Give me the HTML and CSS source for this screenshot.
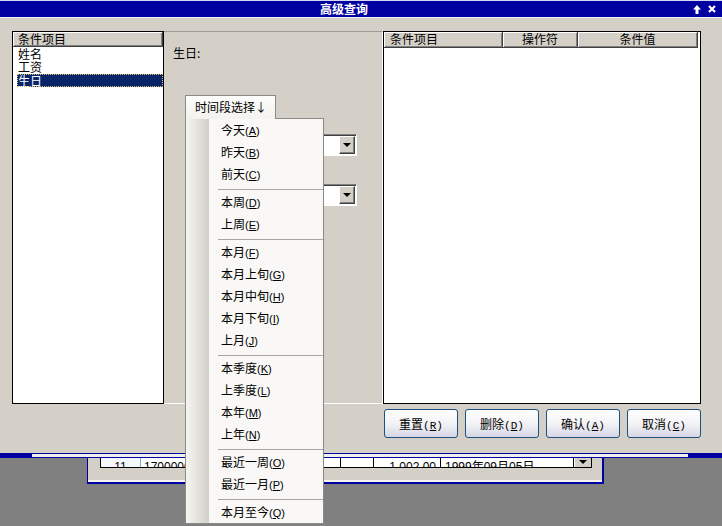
FILE: index.html
```html
<!DOCTYPE html>
<html lang="zh-CN">
<head>
    <meta charset="UTF-8">
    <title>高级查询</title>
    <link rel="stylesheet" href="styles.css">
</head>
<body>
    <div class="desktop">
        <!-- Query dialog -->
        <div class="window">
            <div class="titlebar">
                <span class="title">高级查询</span>
                <div class="title-btns">
                    <svg width="8" height="9" viewBox="0 0 8 9"><path d="M4 0 L8 4.5 H5.5 V9 H2.5 V4.5 H0 Z" fill="#fff"/></svg>
                    <svg width="8" height="8" viewBox="0 0 8 8"><path d="M1 1 L7 7 M7 1 L1 7" stroke="#fff" stroke-width="2.2"/></svg>
                </div>
            </div>

            <div class="body">
                <div class="panes">
                    <!-- Field list -->
                    <div class="list-pane">
                        <div class="col-head">条件项目</div>
                        <ul class="items">
                            <li>姓名</li>
                            <li>工资</li>
                            <li class="sel">生日</li>
                        </ul>
                    </div>

                    <!-- Editor for current field -->
                    <div class="edit-pane">
                        <div class="field-label">生日:</div>
                        <div class="range-picker">
                            <div class="range-btn">时间段选择↓</div>
                            <div class="menu">
                                <div class="menu-item">今天<span class="key">(<u>A</u>)</span></div>
                                <div class="menu-item">昨天<span class="key">(<u>B</u>)</span></div>
                                <div class="menu-item">前天<span class="key">(<u>C</u>)</span></div>
                                <div class="menu-sep"></div>
                                <div class="menu-item">本周<span class="key">(<u>D</u>)</span></div>
                                <div class="menu-item">上周<span class="key">(<u>E</u>)</span></div>
                                <div class="menu-sep"></div>
                                <div class="menu-item">本月<span class="key">(<u>F</u>)</span></div>
                                <div class="menu-item">本月上旬<span class="key">(<u>G</u>)</span></div>
                                <div class="menu-item">本月中旬<span class="key">(<u>H</u>)</span></div>
                                <div class="menu-item">本月下旬<span class="key">(<u>I</u>)</span></div>
                                <div class="menu-item">上月<span class="key">(<u>J</u>)</span></div>
                                <div class="menu-sep"></div>
                                <div class="menu-item">本季度<span class="key">(<u>K</u>)</span></div>
                                <div class="menu-item">上季度<span class="key">(<u>L</u>)</span></div>
                                <div class="menu-item">本年<span class="key">(<u>M</u>)</span></div>
                                <div class="menu-item">上年<span class="key">(<u>N</u>)</span></div>
                                <div class="menu-sep"></div>
                                <div class="menu-item">最近一周<span class="key">(<u>O</u>)</span></div>
                                <div class="menu-item">最近一月<span class="key">(<u>P</u>)</span></div>
                                <div class="menu-sep"></div>
                                <div class="menu-item">本月至今<span class="key">(<u>Q</u>)</span></div>
                            </div>
                        </div>
                        <div class="combo first"><span class="combo-arrow"><i></i></span></div>
                        <div class="combo second"><span class="combo-arrow"><i></i></span></div>
                    </div>

                    <!-- Condition grid -->
                    <div class="grid-pane">
                        <div class="grid-head">
                            <span class="left">条件项目</span>
                            <span>操作符</span>
                            <span>条件值</span>
                        </div>
                    </div>
                </div>

                <div class="actions">
                    <button class="btn">重置<span class="acc">(<u>R</u>)</span></button>
                    <button class="btn">删除<span class="acc">(<u>D</u>)</span></button>
                    <button class="btn">确认<span class="acc">(<u>A</u>)</span></button>
                    <button class="btn">取消<span class="acc">(<u>C</u>)</span></button>
                </div>
            </div>

            <div class="frame-bottom">
                <span class="seg-edge"></span>
                <span class="seg-mid"></span>
                <span class="seg-edge right"></span>
            </div>
        </div>

        <!-- Window behind the dialog -->
        <div class="back-window">
            <div class="back-row">
                <span class="cell c1">11</span>
                <span class="cell c2">17000003</span>
                <span class="cell c3"></span>
                <span class="cell c4">1,002.00</span>
                <span class="cell c5">1999年09月05日</span>
                <span class="cell c6"><i></i></span>
            </div>
        </div>
    </div>
</body>
</html>
```
FILE: styles.css
```css
:root {
    --face: #d4d0c8;
    --title-blue: #0000a0;
    --shadow: #808080;
    --dark: #404040;
}

* {
    box-sizing: border-box;
}

body {
    margin: 0;
    background: var(--shadow);
    font-family: "Noto Sans CJK SC", "Liberation Sans", sans-serif;
    font-size: 12px;
    color: #000;
}

.desktop {
    width: 722px;
    height: 526px;
    overflow: hidden;
}

.window {
    width: 722px;
    background: var(--face);
}

/* Title bar */
.titlebar {
    display: flex;
    height: 18px;
    border-top: 1px solid #d8d8f0;
    border-bottom: 1px solid #f4f4f4;
    background: var(--title-blue);
    color: #fff;
}

.title {
    flex: 1;
    text-align: center;
    font-weight: bold;
    line-height: 16px;
}

.title-btns {
    width: 34px;
    display: flex;
    align-items: center;
    gap: 7px;
    padding-left: 5px;
}

.body {
    height: 435px;
    padding: 13px 21px 0 12px;
}

.panes {
    display: flex;
    height: 373px;
}

/* Left field list */
.list-pane {
    width: 152px;
    border: 1px solid #000;
    background: #fff;
}

.col-head {
    height: 15px;
    line-height: 13px;
    padding-left: 5px;
    background: var(--face);
    border-right: 1px solid var(--dark);
    border-bottom: 1px solid var(--dark);
    box-shadow: inset 1px 1px 0 #fff, inset -1px -1px 0 var(--shadow);
}

.items {
    list-style: none;
    margin: 0;
    padding: 0;
}

.items li {
    line-height: 13px;
    padding-left: 5px;
}

.items li.sel {
    margin: 1px 0 0 4px;
    padding-left: 1px;
    background: #0a246a;
    color: #fff;
    outline: 1px dotted #d8c070;
    outline-offset: -1px;
}

/* Middle editor */
.edit-pane {
    width: 219px;
    border-top: 1px solid #a09c94;
    border-right: 1px solid #fff;
    border-bottom: 1px solid #fff;
}

.field-label {
    margin: 14px 0 0 9px;
    line-height: 14px;
}

.range-picker {
    position: relative;
    width: 91px;
    margin: 35px 0 0 21px;
}

.range-btn {
    position: relative;
    z-index: 3;
    height: 24px;
    padding-left: 9px;
    line-height: 22px;
    border: 1px solid #8c8a84;
    border-bottom: 0;
    background: linear-gradient(#fdfdfc, #f3f2ee);
}

.menu {
    position: absolute;
    z-index: 2;
    left: 0;
    top: 23px;
    width: 139px;
    border: 1px solid #8c8a84;
    background: linear-gradient(to right, #f6f5f2 0, #d2cfc7 23px, #f9f8f6 23px);
}

.menu-item {
    height: 22px;
    line-height: 22px;
    padding-left: 35px;
    white-space: nowrap;
}

.menu-sep {
    margin: 4px 0 1px 32px;
    border-top: 1px solid #a6a6a6;
}

.key {
    font-family: "Liberation Sans", sans-serif;
    font-size: 11px;
}

.combo {
    display: flex;
    justify-content: flex-end;
    width: 160px;
    height: 22px;
    margin: 15px 25px 0 auto;
    padding: 1px;
    border: 1px solid;
    border-color: var(--shadow) #fff #fff var(--shadow);
    box-shadow: inset 1px 1px 0 var(--dark);
    background: #fff;
}

.combo.second {
    margin-top: 28px;
}

.combo-arrow {
    width: 16px;
    display: flex;
    align-items: center;
    justify-content: center;
    background: var(--face);
    border: 1px solid;
    border-color: #fff var(--dark) var(--dark) #fff;
    box-shadow: inset -1px -1px 0 var(--shadow);
}

.combo-arrow i,
.c6 i {
    width: 0;
    height: 0;
    border-left: 4px solid transparent;
    border-right: 4px solid transparent;
    border-top: 4px solid #000;
}

/* Right condition grid */
.grid-pane {
    width: 318px;
    border: 1px solid #000;
    background: #fff;
}

.grid-head {
    display: grid;
    grid-template-columns: 119px 75px 120px;
    height: 16px;
}

.grid-head span {
    line-height: 14px;
    text-align: center;
    background: var(--face);
    border-right: 1px solid var(--dark);
    border-bottom: 1px solid var(--dark);
    box-shadow: inset 1px 1px 0 #fff, inset -1px -1px 0 var(--shadow);
}

.grid-head span.left {
    text-align: left;
    padding-left: 6px;
}

/* Buttons */
.actions {
    display: flex;
    justify-content: flex-end;
    gap: 7px;
    margin-top: 5px;
}

.btn {
    width: 74px;
    height: 29px;
    padding: 0;
    border: 1px solid #1c5180;
    border-radius: 3px;
    background: linear-gradient(#ffffff, #f3f3f6 50%, #d6d6e6);
    font-family: inherit;
    font-size: 12px;
    color: #000;
}

.acc {
    font-family: "Liberation Mono", monospace;
    font-size: 11px;
}

/* Frame bottom edge */
.frame-bottom {
    display: flex;
    height: 5px;
}

.seg-edge {
    width: 32px;
    background: var(--title-blue);
}

.seg-edge.right {
    width: 34px;
}

.seg-mid {
    flex: 1;
    border-top: 1px solid var(--title-blue);
    border-bottom: 1px solid var(--title-blue);
    background: #f0efea;
}

/* Window peeking out below */
.back-window {
    width: 517px;
    height: 26px;
    margin-left: 87px;
    border-left: 1px solid var(--title-blue);
    border-right: 2px solid var(--title-blue);
    border-bottom: 2px solid var(--title-blue);
    background: var(--face);
    box-shadow: inset 0 -2px 0 #f4f3ee;
}

.back-row {
    display: flex;
    width: 492px;
    height: 10px;
    margin-left: 12px;
    border: 1px solid #000;
    border-top: 0;
    background: #fff;
    overflow: hidden;
    font-family: "Liberation Sans", "Noto Sans CJK SC", sans-serif;
}

.cell {
    padding-top: 3px;
    line-height: 12px;
    white-space: nowrap;
    overflow: hidden;
    border-right: 1px solid #000;
}

.c1 {
    width: 40px;
    text-align: center;
    background: #f4f7fb;
    border-right-color: #7aaedc;
}

.c2 {
    width: 200px;
    padding-left: 3px;
}

.c3 {
    width: 33px;
}

.c4 {
    width: 67px;
    padding-right: 4px;
    text-align: right;
}

.c5 {
    width: 133px;
    padding-left: 4px;
}

.c6 {
    flex: 1;
    display: flex;
    justify-content: center;
    padding-top: 2px;
    background: var(--face);
    border-right: 0;
    border-left: 1px solid #fff;
}
```
